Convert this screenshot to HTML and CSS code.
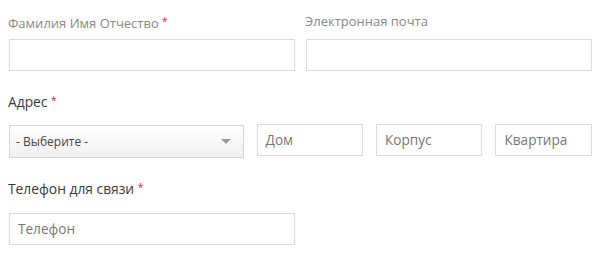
FILE: index.html
```html
<!DOCTYPE html>
<html lang="ru">
<head>
<meta charset="utf-8">
<link rel="stylesheet" href="styles.css">
</head>
<body>
<form class="form">
  <div class="row two">
    <div class="field">
      <label class="label muted">Фамилия Имя Отчество <span class="req">*</span></label>
      <div class="input"></div>
    </div>
    <div class="field">
      <label class="label muted">Электронная почта</label>
      <div class="input"></div>
    </div>
  </div>
  <div class="field addr">
    <label class="label dark">Адрес <span class="req">*</span></label>
    <div class="addr-row">
      <div class="select"><span>- Выберите -</span><span class="caret"></span></div>
      <div class="input ph dom">Дом</div>
      <div class="input ph korp">Корпус</div>
      <div class="input ph kv">Квартира</div>
    </div>
  </div>
  <div class="field phone">
    <label class="label dark">Телефон для связи <span class="req">*</span></label>
    <div class="input ph">Телефон</div>
  </div>
</form>
</body>
</html>
```
FILE: styles.css
```css
html, body { margin: 0; padding: 0; background: #fff; }
body { font-family: "Open Sans", "DejaVu Sans", sans-serif; font-size: 13px; color: #444; }
.form { padding: 12px 8px 0 9px; width: 583px; }
.row.two { display: grid; grid-template-columns: 286px 286px; column-gap: 11px; }
.field { display: flex; flex-direction: column; }
.label { display: block; line-height: 18px; height: 18px; margin-left: -1px; margin-bottom: 9px; color: #444; }
.label.muted { color: #888; }
.label.dark { font-size: 13.8px; color: #3a3a3a; }
.req { color: #d9232d; font-size: 10px; vertical-align: 3px; }
.input { box-sizing: border-box; height: 32px; border: 1px solid #dcdcdc; background: #fff; color: #777; padding: 0 8px; line-height: 30px; }
.ph { font-size: 13.6px; }
.addr { margin-top: 20px; }
.addr .label { margin-bottom: 15px; }
.addr-row { display: flex; gap: 13px; align-items: flex-start; }
.select { box-sizing: border-box; width: 236px; height: 33px; margin-top: 1px; border: 1px solid #d4d4d4; background: linear-gradient(#ffffff, #f0f0f0); display: flex; align-items: center; justify-content: space-between; padding: 0 8px 0 6px; color: #444; font-size: 12px; }
.caret { width: 0; height: 0; border-left: 5px solid transparent; border-right: 5px solid transparent; border-top: 5px solid #999; margin-right: 4px; }
.dom { width: 107px; }
.korp { width: 107px; }
.kv { width: 97px; }
.phone { margin-top: 20px; }
.phone .label { margin-bottom: 17px; }
.phone .input { width: 286px; }
```
